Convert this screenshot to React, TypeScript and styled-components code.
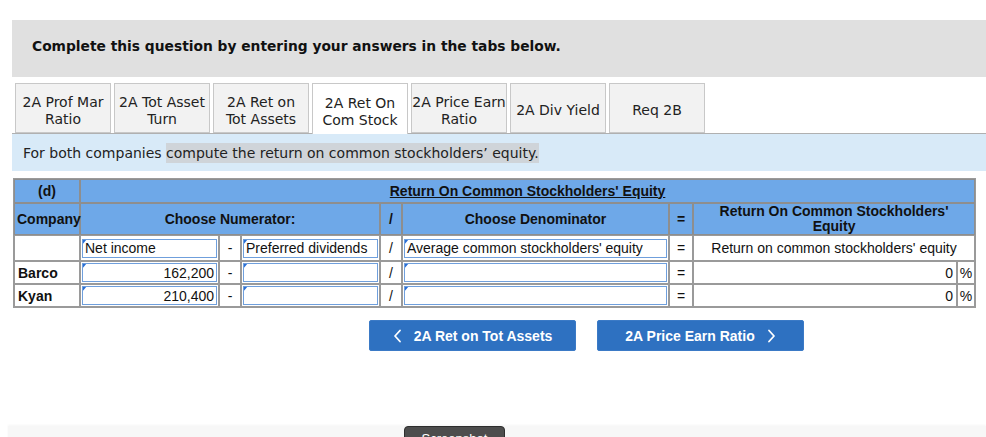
import React from "react";
import styled, { createGlobalStyle } from "styled-components";

const Global = createGlobalStyle`
  html, body { margin: 0; padding: 0; background: #fff; }
  body { font-family: "DejaVu Sans", Verdana, sans-serif; color: #222; overflow: hidden; }
  * { box-sizing: border-box; }
`;

const Page = styled.div`
  width: 986px;
  height: 437px;
  padding-left: 12px;
  padding-top: 20px;
  position: relative;
  overflow: hidden;
`;

const Banner = styled.div`
  height: 57px;
  background: #e0e0e0;
  display: flex;
  align-items: center;
  padding-left: 20px;
  font-family: "DejaVu Sans", Verdana, sans-serif;
  font-weight: bold;
  font-size: 13.8px;
  color: #111;
  padding-bottom: 6px;
`;

const TabBar = styled.div`
  margin-top: 6px;
  display: flex;
  gap: 3px;
  padding-left: 3px;
  border-bottom: 1px solid #b0b0b0;
  height: 51px;
`;

const Tab = styled.div<{ $active?: boolean }>`
  width: 96px;
  height: ${(p) => (p.$active ? "51px" : "50px")};
  background: ${(p) => (p.$active ? "#fff" : "#f2f2f2")};
  border: 1px solid #c8c8c8;
  border-bottom: ${(p) => (p.$active ? "none" : "1px solid #c8c8c8")};
  display: flex;
  align-items: center;
  justify-content: center;
  text-align: center;
  font-size: 14px;
  line-height: 17px;
  color: #222;
  padding-top: 5px;
  white-space: nowrap;
  position: relative;
  z-index: 1;
`;

const Instruction = styled.div`
  height: 37px;
  background: #d8eaf8;
  display: flex;
  align-items: center;
  padding-left: 11px;
  font-size: 14px;
  color: #222;
`;

const Mark = styled.span`
  background: #cfd4d9;
  padding: 2px 0;
`;

const Table = styled.table`
  margin-top: 7px;
  margin-left: 1px;
  width: 961px;
  table-layout: fixed;
  border-collapse: separate;
  border-spacing: 0;
  border: 1px solid #9a9a9a;
  font-family: "Liberation Sans", Arial, sans-serif;
  font-size: 14px;
  color: #111;
`;

const Th = styled.th<{ $h?: number; $left?: boolean }>`
  background: #6ea8e8;
  border: 1px solid #8e8e8e;
  height: ${(p) => p.$h ?? 24}px;
  padding: 0 2px;
  font-weight: bold;
  text-align: ${(p) => (p.$left ? "left" : "center")};
  line-height: 15px;
  color: #111;
`;

const Title = styled.span`
  text-decoration: underline;
`;

const Td = styled.td<{ $h?: number; $align?: string; $bold?: boolean; $pad?: number }>`
  border: 1px solid #9a9a9a;
  height: ${(p) => p.$h ?? 23}px;
  padding: ${(p) => (p.$pad !== undefined ? `0 ${p.$pad}px` : "0 2px")};
  text-align: ${(p) => p.$align ?? "center"};
  font-weight: ${(p) => (p.$bold ? "bold" : "normal")};
  background: #fff;
  white-space: nowrap;
  line-height: 16px;
`;

const InputCell = styled.td`
  border: 1px solid #9a9a9a;
  padding: 1px;
  background: #fff;
`;

const Field = styled.div<{ $right?: boolean }>`
  position: relative;
  height: 100%;
  min-height: 19px;
  border: 1px solid #6f9fdc;
  background: #fff;
  display: flex;
  align-items: center;
  justify-content: ${(p) => (p.$right ? "flex-end" : "flex-start")};
  padding: 0 2px 0 2px;
  white-space: nowrap;
  overflow: hidden;
  line-height: 16px;
  &::before {
    content: "";
    position: absolute;
    left: -1px;
    top: -1px;
    border-top: 6px solid #2a6fd6;
    border-right: 5px solid transparent;
  }
`;

const Buttons = styled.div`
  margin-top: 12px;
  margin-left: 357px;
  display: flex;
  gap: 21px;
`;

const NavButton = styled.button`
  width: 207px;
  height: 31px;
  background: #2e71c1;
  border: 1px solid #3b7ac6;
  border-radius: 2px;
  color: #fff;
  font-family: "Liberation Sans", Arial, sans-serif;
  font-weight: bold;
  font-size: 14px;
  display: flex;
  align-items: center;
  justify-content: center;
  gap: 12px;
  padding: 0;
`;

const Footer = styled.div`
  position: absolute;
  left: 8px;
  right: 0;
  top: 426px;
  height: 40px;
  background: #f7f7f7;
  box-shadow: 0 -1px 2px rgba(0, 0, 0, 0.04);
`;

const DarkButton = styled.div`
  position: absolute;
  left: 396px;
  top: 0;
  width: 101px;
  height: 30px;
  background: #4d4d4d;
  border: 1px solid #2e2e2e;
  border-radius: 4px;
  color: #fff;
  font-family: "Liberation Sans", Arial, sans-serif;
  font-size: 13px;
  display: flex;
  justify-content: center;
  padding-top: 4px;
`;

const Chevron = ({ dir }: { dir: "left" | "right" }) => (
  <svg width="9" height="14" viewBox="0 0 9 14" fill="none">
    <path
      d={dir === "left" ? "M7 1.5 L2 7 L7 12.5" : "M2 1.5 L7 7 L2 12.5"}
      stroke="#fff"
      strokeWidth="1.8"
      strokeLinecap="round"
      strokeLinejoin="round"
    />
  </svg>
);

const tabs = [
  ["2A Prof Mar", "Ratio"],
  ["2A Tot Asset", "Turn"],
  ["2A Ret on", "Tot Assets"],
  ["2A Ret On", "Com Stock"],
  ["2A Price Earn", "Ratio"],
  ["2A Div Yield"],
  ["Req 2B"],
];

const rows = [
  { name: "Barco", num: "162,200", h: 23 },
  { name: "Kyan", num: "210,400", h: 22 },
];

export default function App() {
  return (
    <Page>
      <Global />
      <Banner>Complete this question by entering your answers in the tabs below.</Banner>
      <TabBar>
        {tabs.map((t, i) => (
          <Tab key={i} $active={i === 3}>
            <div>
              {t.map((l, j) => (
                <div key={j}>{l}</div>
              ))}
            </div>
          </Tab>
        ))}
      </TabBar>
      <Instruction>
        <span>
          For both companies <Mark>compute the return on common stockholders’ equity.</Mark>
        </span>
      </Instruction>
      <Table>
        <colgroup>
          <col style={{ width: 66 }} />
          <col style={{ width: 139 }} />
          <col style={{ width: 22 }} />
          <col style={{ width: 139 }} />
          <col style={{ width: 22 }} />
          <col style={{ width: 267 }} />
          <col style={{ width: 24 }} />
          <col style={{ width: 264 }} />
          <col style={{ width: 18 }} />
        </colgroup>
        <thead>
          <tr>
            <Th $h={23}>(d)</Th>
            <Th colSpan={8}>
              <Title>Return On Common Stockholders' Equity</Title>
            </Th>
          </tr>
          <tr>
            <Th $h={31} $left>Company</Th>
            <Th colSpan={3}>Choose Numerator:</Th>
            <Th>/</Th>
            <Th>Choose Denominator</Th>
            <Th>=</Th>
            <Th colSpan={2}>
              Return On Common Stockholders'
              <br />
              Equity
            </Th>
          </tr>
        </thead>
        <tbody>
          <tr>
            <Td $h={26}></Td>
            <InputCell>
              <Field>Net income</Field>
            </InputCell>
            <Td>-</Td>
            <InputCell>
              <Field>Preferred dividends</Field>
            </InputCell>
            <Td>/</Td>
            <InputCell>
              <Field>Average common stockholders' equity</Field>
            </InputCell>
            <Td>=</Td>
            <Td colSpan={2}>Return on common stockholders' equity</Td>
          </tr>
          {rows.map((r) => (
            <tr key={r.name}>
              <Td $h={r.h} $align="left" $bold $pad={3}>
                {r.name}
              </Td>
              <InputCell>
                <Field $right>{r.num}</Field>
              </InputCell>
              <Td>-</Td>
              <InputCell>
                <Field />
              </InputCell>
              <Td>/</Td>
              <InputCell>
                <Field />
              </InputCell>
              <Td>=</Td>
              <Td $align="right" $pad={3}>0</Td>
              <Td $pad={0}>%</Td>
            </tr>
          ))}
        </tbody>
      </Table>
      <Buttons>
        <NavButton>
          <Chevron dir="left" />
          <span>2A Ret on Tot Assets</span>
        </NavButton>
        <NavButton>
          <span>2A Price Earn Ratio</span>
          <Chevron dir="right" />
        </NavButton>
      </Buttons>
      <Footer>
        <DarkButton>Screenshot</DarkButton>
      </Footer>
    </Page>
  );
}
